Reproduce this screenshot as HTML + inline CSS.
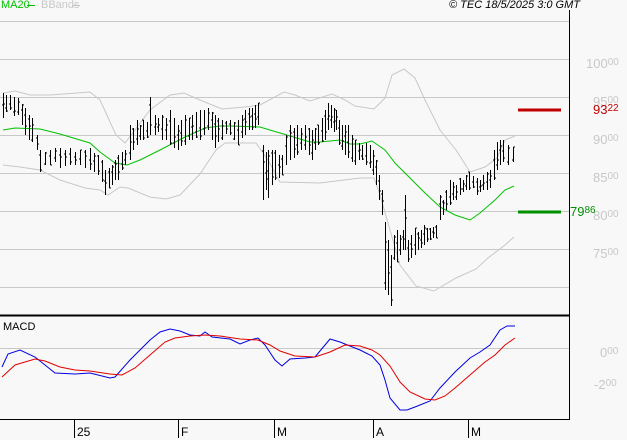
<!DOCTYPE html>
<html><head><meta charset="utf-8"><style>
html,body{margin:0;padding:0;background:#f8f8f8;}
body{width:627px;height:440px;position:relative;overflow:hidden;font-family:"Liberation Sans",sans-serif;}
.t{position:absolute;font-size:11px;line-height:11px;white-space:nowrap;}
.ax{position:absolute;font-size:13px;line-height:13px;color:#c8c8c8;white-space:nowrap;}
.ax sup{font-size:10px;vertical-align:3px;line-height:0;}
</style></head><body>
<svg id="s" width="627" height="440" style="position:absolute;left:0;top:0" xmlns="http://www.w3.org/2000/svg">
<g stroke="#c8c8c8" stroke-width="1">
<line x1="0" y1="21.5" x2="569" y2="21.5"/><line x1="0" y1="59.5" x2="569" y2="59.5"/>
<line x1="0" y1="97.5" x2="569" y2="97.5"/><line x1="0" y1="135.5" x2="569" y2="135.5"/>
<line x1="0" y1="173.5" x2="569" y2="173.5"/><line x1="0" y1="211.5" x2="569" y2="211.5"/>
<line x1="0" y1="249.5" x2="569" y2="249.5"/><line x1="0" y1="287.5" x2="569" y2="287.5"/>
<line x1="0" y1="348.5" x2="569" y2="348.5"/>
</g>
<line x1="569.5" y1="10" x2="569.5" y2="420" stroke="#000"/>
<line x1="0" y1="315.5" x2="569" y2="315.5" stroke="#000" stroke-width="2"/>
<line x1="0" y1="419.5" x2="570" y2="419.5" stroke="#000"/>
<g stroke="#000"><line x1="74.5" y1="420" x2="74.5" y2="438"/><line x1="178.5" y1="420" x2="178.5" y2="438"/><line x1="274.5" y1="420" x2="274.5" y2="438"/><line x1="373.5" y1="420" x2="373.5" y2="438"/><line x1="468.5" y1="420" x2="468.5" y2="438"/></g>
<polyline fill="none" stroke="#c8c8c8" points="3,93 15,91 30,95 50,95 90,92 100,100 116,135 125,143 135,130 150,110 170,95 184,93 200,100 222,109 245,107 260,105 284,92 295,95 310,101 332,94 345,100 355,106 374,109 385,98 392,75 404,69 415,78 425,100 440,130 456,150 470,172 485,167 497,158 505,140 515,136"/>
<polyline fill="none" stroke="#c8c8c8" points="3,165 20,167 40,170 60,180 85,188 100,190 108,195 120,187 128,188 150,197 166,199 180,195 200,174 216,150 225,143 256,143 268,160 280,182 320,183 360,178 374,178 380,195 390,230 400,265 416,286 434,291 456,278 476,269 488,258 505,245 514,237"/>
<polyline fill="none" stroke="#00c000" points="3,130 15,128 40,129 60,134 90,143 100,152 115,163 127,165 140,160 160,150 185,137 205,128 220,126 232,126 260,127 290,136 310,142 320,142 340,140 350,144 360,144 372,141 385,150 395,163 410,178 425,193 440,207 455,215 470,220 480,213 495,200 505,190 514,186"/>
<path id="bars" fill="none" stroke="#000" d=""/>
<line x1="518" y1="110" x2="561" y2="110" stroke="#c00000" stroke-width="3"/>
<line x1="518" y1="212" x2="561" y2="212" stroke="#009000" stroke-width="3"/>
<polyline fill="none" stroke="#0000e0" points="2,367 8,354 20,350 35,357 55,373 75,374 90,373 110,378 115,377 130,360 140,350 150,340 160,332 170,329 180,331 190,335 200,336 205,332 212,337 230,339 240,344 250,340 258,338 265,345 275,360 282,366 290,359 305,358 315,357 325,345 330,339 340,342 350,346 360,350 372,356 380,365 385,380 390,398 400,410 407,410 415,407 430,401 440,388 455,372 470,358 480,352 490,345 500,330 507,326 515,326"/>
<polyline fill="none" stroke="#e00000" points="2,377 15,365 35,359 45,361 60,367 75,370 90,371 110,374 122,375 135,368 150,355 165,342 175,338 190,336 205,335 220,336 240,339 258,340 270,345 280,351 295,356 315,357 330,352 345,345 360,346 372,350 380,355 390,366 400,382 410,392 425,399 435,400 445,396 455,388 470,375 485,362 495,355 505,345 515,338"/>
<line x1="27" y1="5.5" x2="35" y2="5.5" stroke="#00c000"/>
<line x1="72" y1="5.5" x2="80" y2="5.5" stroke="#c8c8c8"/>
</svg>
<div class="t" style="left:1px;top:0;color:#00c000">MA20</div>
<div class="t" style="left:41px;top:0;color:#c8c8c8">BBands</div>
<div class="t" style="left:449px;top:0;color:#000;font-style:italic">© TEC 18/5/2025 3:0 GMT</div>
<div class="ax" style="left:586px;top:57px">100<sup>00</sup></div>
<div class="ax" style="left:593px;top:95px">95<sup>00</sup></div>
<div class="ax" style="left:593px;top:133px">90<sup>00</sup></div>
<div class="ax" style="left:593px;top:171px">85<sup>00</sup></div>
<div class="ax" style="left:593px;top:209px">80<sup>00</sup></div>
<div class="ax" style="left:593px;top:247px">75<sup>00</sup></div>
<div class="ax" style="left:600px;top:346px">0<sup>00</sup></div>
<div class="ax" style="left:594px;top:378px">-2<sup>00</sup></div>
<div class="ax" style="left:593px;top:103px;color:#c00000">93<sup>22</sup></div>
<div class="ax" style="left:570px;top:205px;color:#009000">79<sup>86</sup></div>
<div class="t" style="left:3px;top:322px;color:#000">MACD</div>
<div class="t" style="left:77px;top:427px;font-size:12px">25</div>
<div class="t" style="left:181px;top:427px;font-size:12px">F</div>
<div class="t" style="left:277px;top:427px;font-size:12px">M</div>
<div class="t" style="left:376px;top:427px;font-size:12px">A</div>
<div class="t" style="left:471px;top:427px;font-size:12px">M</div>
<script>
var k=[[3,93,118],[6,95,112],[10,95,110],[14,97,116],[18,98,115],[22,104,125],[25,108,135],[29,115,140],[32,118,142],[37,135,150],[40,150,172],[45,152,165],[50,150,165],[55,148,162],[60,148,168],[65,150,166],[70,148,165],[75,152,165],[80,150,165],[85,150,168],[90,148,170],[94,153,172],[98,155,175],[102,160,182],[105,170,195],[109,168,188],[112,165,185],[115,160,180],[118,155,180],[122,152,170],[125,150,165],[130,125,160],[133,128,150],[137,120,145],[140,125,140],[143,120,140],[147,122,138],[150,97,135],[155,115,135],[158,118,132],[162,115,140],[166,118,140],[170,110,145],[174,118,148],[178,125,150],[181,120,146],[185,115,145],[189,118,140],[192,115,140],[196,112,138],[200,110,140],[204,110,135],[208,108,130],[212,112,140],[215,115,148],[218,118,142],[222,120,140],[226,121,134],[230,120,135],[234,122,140],[238,120,145],[242,115,138],[245,110,135],[249,108,130],[252,108,130],[255,105,128],[258,103,125],[263,145,200],[266,152,190],[268,150,198],[272,150,185],[275,150,180],[279,155,178],[282,155,175],[286,135,165],[290,125,160],[294,128,158],[297,125,155],[301,128,150],[305,125,150],[309,128,155],[312,130,160],[315,128,150],[318,125,145],[322,118,142],[325,110,140],[328,103,130],[331,105,128],[334,108,132],[336,110,130],[339,120,145],[342,125,150],[345,125,155],[348,125,158],[352,135,162],[355,140,165],[359,143,160],[362,145,160],[366,143,165],[370,145,168],[373,150,175],[376,160,185],[379,175,200],[382,190,215],[385,222,290],[388,240,295],[391,255,306],[394,235,260],[397,230,262],[400,235,255],[403,230,250],[405,195,250],[408,240,262],[411,235,258],[415,228,255],[418,232,250],[421,230,248],[424,225,245],[427,228,242],[430,228,240],[433,227,238],[436,225,238],[440,195,220],[443,200,215],[446,190,210],[450,180,205],[453,182,200],[456,185,200],[460,178,195],[463,180,192],[466,175,190],[469,172,190],[473,176,188],[477,178,195],[480,180,192],[483,175,190],[487,172,190],[490,170,188],[494,150,180],[497,142,170],[500,140,165],[503,140,162],[508,145,165],[513,147,162]];
var d="",r=1;
for(var i=0;i<k.length;i++){var x=k[i][0]+0.5,h=k[i][1],l=k[i][2];r=(r*37+11)%97;var o=h+(l-h)*(r/97);r=(r*37+11)%97;var c=h+(l-h)*(r/97);
d+="M"+x+" "+h+"V"+l+"M"+(x-1.5)+" "+o.toFixed(0)+"H"+x+"M"+x+" "+c.toFixed(0)+"H"+(x+1.5);}
document.getElementById("bars").setAttribute("d",d);
</script>
</body></html>
